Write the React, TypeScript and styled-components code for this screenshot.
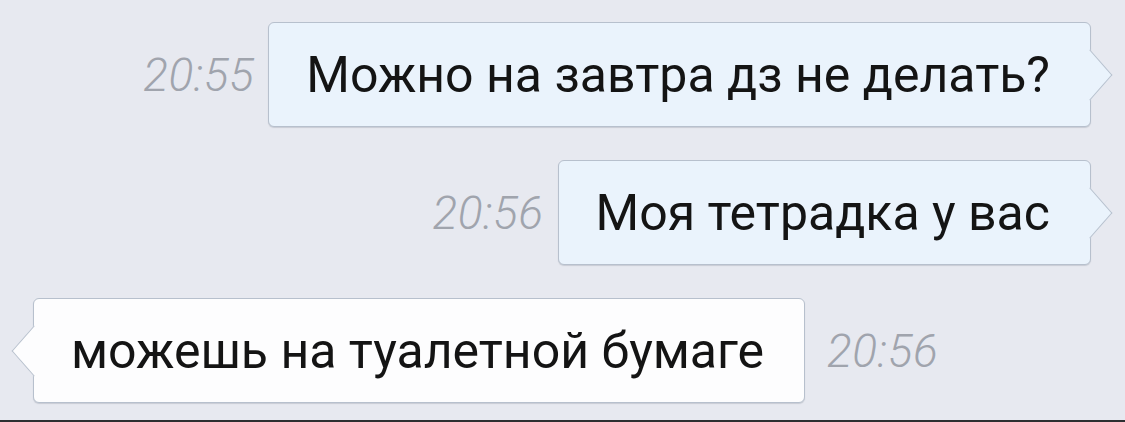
import styled, { createGlobalStyle, css } from "styled-components";

const GlobalStyle = createGlobalStyle`
  html, body {
    margin: 0;
    padding: 0;
    background: #e7e9f0;
  }
  body {
    font-family: Roboto, "Noto Sans", "Liberation Sans", sans-serif;
  }
`;

const Screen = styled.div`
  height: 422px;
  display: flex;
  flex-direction: column;
  overflow: hidden;
`;

const Chat = styled.div`
  flex: 1;
  display: flex;
  flex-direction: column;
  gap: 33px;
  padding: 22px 34px 0 33px;
`;

const Row = styled.div<{ $out: boolean }>`
  display: flex;
  align-items: center;
  gap: ${(p) => (p.$out ? "14px" : "22px")};
  justify-content: ${(p) => (p.$out ? "flex-end" : "flex-start")};
`;

const Time = styled.span`
  font-size: 46px;
  font-style: italic;
  font-weight: 300;
  color: #a0a4ad;
  letter-spacing: 0.5px;
`;

const Bubble = styled.div<{ $out: boolean }>`
  position: relative;
  height: 105px;
  box-sizing: border-box;
  display: flex;
  align-items: center;
  padding: 0 40px 0 37px;
  border: 1px solid #b7c0cd;
  border-radius: 6px;
  box-shadow: 0 1px 1px rgba(60, 70, 90, 0.18);
  background: ${(p) => (p.$out ? "#eaf3fc" : "#fdfdfe")};
  font-size: 50px;
  color: #141414;
  white-space: nowrap;

  &::after {
    content: "";
    position: absolute;
    top: 50%;
    width: 36px;
    height: 36px;
    box-sizing: border-box;
    background: inherit;
    ${(p) =>
      p.$out
        ? css`
            right: -18px;
            border-top: 1px solid #b7c0cd;
            border-right: 1px solid #b7c0cd;
          `
        : css`
            left: -18px;
            border-bottom: 1px solid #b7c0cd;
            border-left: 1px solid #b7c0cd;
          `}
    transform: translateY(-50%) scaleX(0.88) rotate(45deg);
  }
`;

const BottomBar = styled.div`
  height: 2px;
  background: #2d2e31;
`;

type Message = { text: string; time: string; out: boolean };

const messages: Message[] = [
  { text: "Можно на завтра дз не делать?", time: "20:55", out: true },
  { text: "Моя тетрадка у вас", time: "20:56", out: true },
  { text: "можешь на туалетной бумаге", time: "20:56", out: false },
];

export default function App() {
  return (
    <Screen>
      <GlobalStyle />
      <Chat>
        {messages.map((m, i) => (
          <Row key={i} $out={m.out}>
            {m.out && <Time>{m.time}</Time>}
            <Bubble $out={m.out}>{m.text}</Bubble>
            {!m.out && <Time>{m.time}</Time>}
          </Row>
        ))}
      </Chat>
      <BottomBar />
    </Screen>
  );
}
